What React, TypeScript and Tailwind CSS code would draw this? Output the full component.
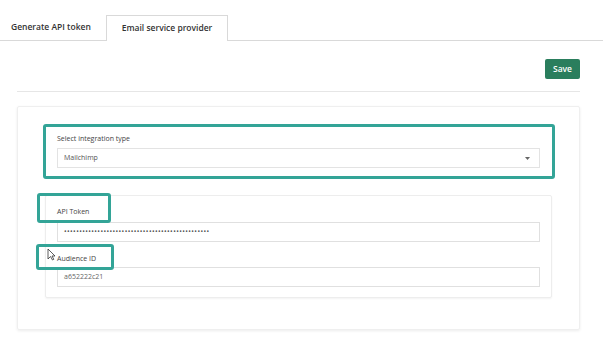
import React from "react";

const font = { fontFamily: '"Open Sans", "Noto Sans", sans-serif' };

function Caret() {
  return (
    <svg width="5" height="3" viewBox="0 0 5 3" aria-hidden>
      <path d="M0 0 H5 L2.5 3 Z" fill="#666" />
    </svg>
  );
}

function Cursor() {
  return (
    <svg width="9" height="13" viewBox="0 0 9 13" aria-hidden>
      <path d="M1 1 V11 L3.5 8.5 L5.5 12 L6.8 11.3 L5 8 H8 Z" fill="#fff" stroke="#333" strokeWidth="0.8" strokeLinejoin="round" />
    </svg>
  );
}

export default function App() {
  return (
    <div className="relative w-[603px] h-[349px] bg-white overflow-hidden text-[#333]" style={font}>
      {/* tabs */}
      <div className="flex h-[41px] items-end border-b border-[#d9d9d9]">
        <button className="h-[25px] w-[106px] text-left pl-[11px] text-[8.5px] font-semibold text-[#333]">Generate API token</button>
        <button className="relative -mb-px h-[26px] w-[122px] border border-b-0 border-[#d9d9d9] bg-white text-[8.5px] font-semibold text-[#333]">
          Email service provider
        </button>
      </div>

      {/* content */}
      <div className="ml-[17px] mr-[23px]">
        <div className="flex justify-end pt-[18px] pb-[12px] border-b border-[#e6e6e6]">
          <button className="h-[20px] w-[35px] rounded-[2px] bg-[#2a7e5d] text-[8.5px] font-semibold text-white">Save</button>
        </div>

        <div className="mt-[14px] h-[224px] rounded-[2px] border border-[#efefef] shadow-[0_1px_3px_rgba(0,0,0,0.08)] px-[27px] pt-[26px]">
          {/* integration type */}
          <div className="px-[12px] pb-[10px]">
            <label className="block text-[7px] leading-[12px] text-[#444]">Select integration type</label>
            <div className="mt-[3px] flex h-[20px] items-center justify-between border border-[#e3e3e3] pl-[6px] pr-[9px]">
              <span className="text-[7px] text-[#555]">Mailchimp</span>
              <Caret />
            </div>
          </div>

          {/* credentials */}
          <div className="mt-[17px] h-[103px] rounded-[2px] border border-[#ededed] shadow-[0_1px_2px_rgba(0,0,0,0.05)] px-[11px] pt-[10px]">
            <label className="block text-[7px] leading-[12px] text-[#444]">API Token</label>
            <div className="mt-[4px] flex h-[20px] items-center border border-[#e0e0e0] pl-[6px]">
              <span className="text-[7px] tracking-[0.4px] text-[#555]">••••••••••••••••••••••••••••••••••••••••••••••••</span>
            </div>
            <label className="mt-[11px] block text-[7px] leading-[12px] text-[#444]">Audience ID</label>
            <div className="mt-[2px] flex h-[20px] items-center border border-[#e0e0e0] pl-[6px]">
              <span className="text-[7px] text-[#666]">a652222c21</span>
            </div>
          </div>
        </div>
      </div>

      {/* annotation boxes */}
      <div className="pointer-events-none absolute left-[43px] top-[124px] h-[55px] w-[512px] rounded-[3px] border-[3px] border-[#33a497]" />
      <div className="pointer-events-none absolute left-[37px] top-[193px] h-[30px] w-[74px] rounded-[3px] border-[3px] border-[#33a497]" />
      <div className="pointer-events-none absolute left-[36px] top-[244px] h-[26px] w-[78px] rounded-[3px] border-[3px] border-[#33a497]" />

      {/* mouse cursor */}
      <div className="pointer-events-none absolute left-[47px] top-[248px]">
        <Cursor />
      </div>
    </div>
  );
}
